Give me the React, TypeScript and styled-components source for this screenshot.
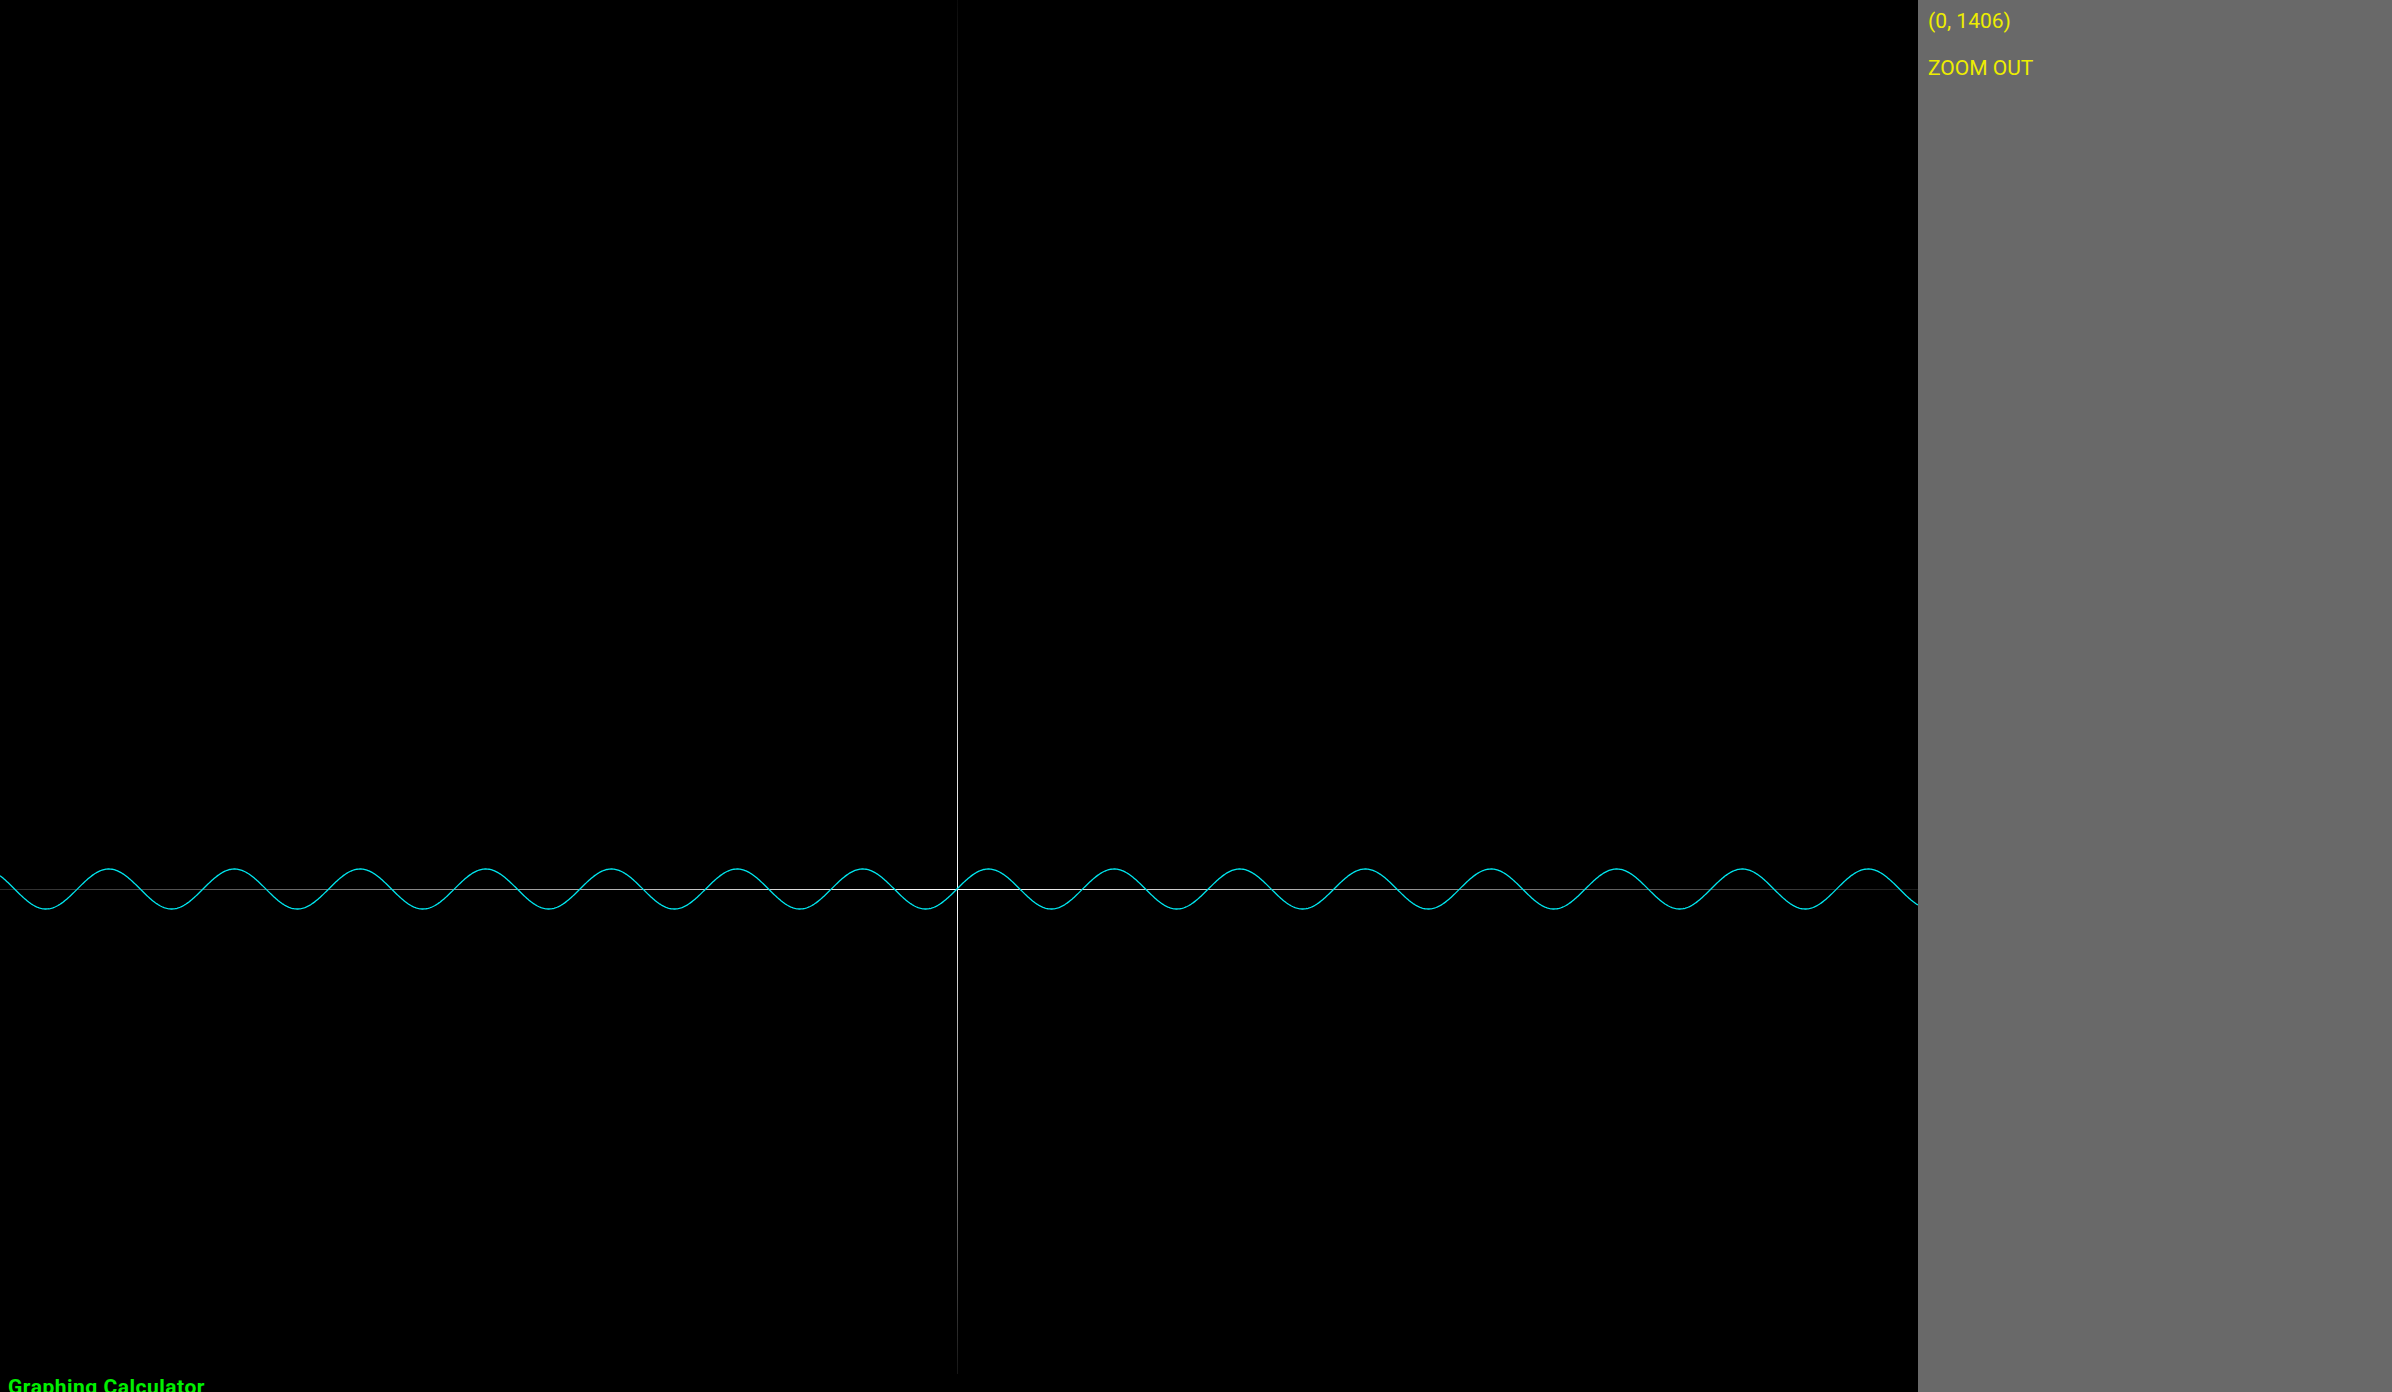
import styled, { createGlobalStyle } from "styled-components";

const GRAPH_W = 1918;
const GRAPH_H = 1374;
const ORIGIN_X = 957;
const ORIGIN_Y = 889;
const SCALE = 20;

const GlobalStyle = createGlobalStyle`
  html, body {
    margin: 0;
    padding: 0;
    background: #000;
    overflow: hidden;
  }
`;

const Layout = styled.div`
  display: flex;
  width: 2392px;
  height: 1392px;
  overflow: hidden;
`;

const GraphPane = styled.div`
  display: flex;
  flex-direction: column;
  width: ${GRAPH_W}px;
  height: 100%;
  background: #000;
  overflow: hidden;
`;

const Canvas = styled.svg`
  display: block;
  flex: none;
`;

const Title = styled.div`
  flex: none;
  padding-left: 8px;
  font-family: Roboto, "Liberation Sans", sans-serif;
  font-size: 21px;
  font-weight: 700;
  line-height: 26px;
  letter-spacing: 0.5px;
  color: #00f000;
  white-space: nowrap;
`;

const Sidebar = styled.aside`
  flex: 1;
  display: flex;
  flex-direction: column;
  gap: 21px;
  padding: 8px 10px;
  background: #696969;
  font-family: Roboto, "Liberation Sans", sans-serif;
  font-size: 21px;
  line-height: 26px;
  color: #eded00;
`;

const Coord = styled.div``;

const ZoomButton = styled.div`
  cursor: pointer;
`;

const wavePath = () => {
  const pts: string[] = [];
  for (let x = 0; x <= GRAPH_W; x += 1) {
    const y = ORIGIN_Y - Math.sin((x - ORIGIN_X) / SCALE) * SCALE;
    pts.push(`${x === 0 ? "M" : "L"}${x} ${y.toFixed(2)}`);
  }
  return pts.join(" ");
};

const Graph = () => (
  <Canvas width={GRAPH_W} height={GRAPH_H} viewBox={`0 0 ${GRAPH_W} ${GRAPH_H}`}>
    <defs>
      <linearGradient id="vfade" x1="0" y1="0" x2="0" y2={GRAPH_H} gradientUnits="userSpaceOnUse">
        <stop offset="0" stopColor="#0a0a0a" />
        <stop offset={ORIGIN_Y / GRAPH_H} stopColor="#ffffff" />
        <stop offset="1" stopColor="#151515" />
      </linearGradient>
      <linearGradient id="hfade" x1="0" y1="0" x2={GRAPH_W} y2="0" gradientUnits="userSpaceOnUse">
        <stop offset="0" stopColor="#2a2a2a" />
        <stop offset={ORIGIN_X / GRAPH_W} stopColor="#ffffff" />
        <stop offset="1" stopColor="#1a1a1a" />
      </linearGradient>
    </defs>
    <line x1={ORIGIN_X + 0.5} y1={0} x2={ORIGIN_X + 0.5} y2={GRAPH_H} stroke="url(#vfade)" strokeWidth={1} />
    <line x1={0} y1={ORIGIN_Y + 0.5} x2={GRAPH_W} y2={ORIGIN_Y + 0.5} stroke="url(#hfade)" strokeWidth={1} />
    <path d={wavePath()} fill="none" stroke="#00e6ee" strokeWidth={1.3} />
  </Canvas>
);

export default function App() {
  return (
    <>
      <GlobalStyle />
      <Layout>
        <GraphPane>
          <Graph />
          <Title>Graphing Calculator</Title>
        </GraphPane>
        <Sidebar>
          <Coord>(0, 1406)</Coord>
          <ZoomButton>ZOOM OUT</ZoomButton>
        </Sidebar>
      </Layout>
    </>
  );
}
